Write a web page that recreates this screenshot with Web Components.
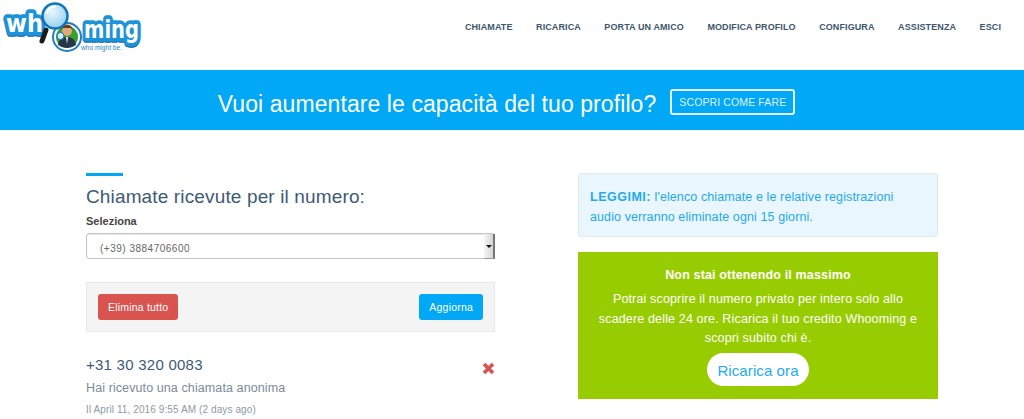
<!DOCTYPE html>
<html lang="it"><head><meta charset="utf-8"><title>Whooming</title>
<style>
html,body{margin:0;padding:0;background:#fff;overflow:hidden;height:419px}
body{font-family:"Liberation Sans",Arial,sans-serif;color:#3d566e}
</style></head><body>
<wh-header></wh-header>
<wh-banner></wh-banner>
<wh-main>
  <wh-calls slot="left"></wh-calls>
  <wh-side slot="right"></wh-side>
</wh-main>
<script>
function def(name,html){
  customElements.define(name,class extends HTMLElement{
    constructor(){super();this.attachShadow({mode:"open"}).innerHTML=html;}
  });
}
def("wh-logo",`<style>:host{display:block;width:145px;height:52px}svg{display:block;overflow:visible}
text{font-family:"DejaVu Sans",sans-serif;font-weight:700}</style>
<svg width="145" height="52" viewBox="0 0 145 52">
<defs><radialGradient id="g" cx=".4" cy=".35" r=".7"><stop offset="0" stop-color="#eaf7fd"/><stop offset="1" stop-color="#8fcdee"/></radialGradient></defs>
<g font-size="25" stroke-linejoin="round" stroke-linecap="round">
<text x="6" y="33.200" textLength="37" lengthAdjust="spacingAndGlyphs" fill="#0c5f9c" stroke="#0c5f9c" stroke-width="7.500">wh</text>
<text x="84" y="39.200" textLength="55" lengthAdjust="spacingAndGlyphs" fill="#0c5f9c" stroke="#0c5f9c" stroke-width="7.500">ming</text>
<text x="6" y="32" textLength="37" lengthAdjust="spacingAndGlyphs" fill="#1d93d9" stroke="#1d93d9" stroke-width="7.500">wh</text>
<text x="84" y="38" textLength="55" lengthAdjust="spacingAndGlyphs" fill="#1d93d9" stroke="#1d93d9" stroke-width="7.500">ming</text>
<text x="6" y="32" textLength="37" lengthAdjust="spacingAndGlyphs" fill="#fff">wh</text>
<text x="84" y="38" textLength="55" lengthAdjust="spacingAndGlyphs" fill="#fff">ming</text>
</g>
<path d="M46 30 L42 41" stroke="#1c1c1c" stroke-width="5" stroke-linecap="round"/>
<circle cx="67" cy="37" r="14" fill="#fff" stroke="#1b7fc4" stroke-width="2"/>
<circle cx="67" cy="37" r="11" fill="#38a12d"/>
<circle cx="67" cy="31" r="5" fill="#e3a77f"/>
<path d="M61.500 30a5.500 5.500 0 0 1 11 0l-1.500-2h-8z" fill="#6b3d1c"/>
<path d="M58 45q1-8 9-8t9 8q-4 3-9 3t-9-3z" fill="#27364a"/>
<path d="M66 37h2l-1 7z" fill="#fff"/>
<circle cx="60.500" cy="36" r="3.500" fill="#cfeefb" stroke="#1b6fa8"/>
<circle cx="55" cy="16" r="12.500" fill="url(#g)" stroke="#0f73b8" stroke-width="2.500"/>
<path d="M47 13a9 9 0 0 1 8-6.500" fill="none" stroke="#fff" stroke-width="2" stroke-linecap="round"/>
<text x="81" y="50" font-size="6.500" fill="#1b87c9" style="font-family:'Liberation Sans',sans-serif;font-weight:400" textLength="41">who might be.</text>
</svg>`);
def("wh-nav",`<style>:host{display:flex;gap:23.500px;font:700 9px/12px "Liberation Sans",sans-serif;color:#3d566e;letter-spacing:.1px}
a{color:inherit;text-decoration:none;white-space:nowrap}</style>
<a>CHIAMATE</a><a>RICARICA</a><a>PORTA UN AMICO</a><a>MODIFICA PROFILO</a><a>CONFIGURA</a><a>ASSISTENZA</a><a>ESCI</a>`);
def("wh-header",`<style>:host{display:flex;height:70px;box-sizing:border-box;justify-content:space-between;padding:0 23px 0 0;background:#fff}
wh-nav{margin-top:21px}</style><wh-logo></wh-logo><wh-nav></wh-nav>`);
def("wh-banner",`<style>:host{display:flex;height:60px;box-sizing:border-box;align-items:center;justify-content:center;gap:14px;background:#00a8f5;color:#fff;padding:4px 11px 0 0}
h2{margin:4px 0 0;font:400 23px/30px "Liberation Sans",sans-serif;letter-spacing:.08px}
a{display:block;box-sizing:border-box;height:26px;padding:0 7px;border:2px solid #e6f6fe;border-radius:3px;font:400 10.500px/23px "Liberation Sans",sans-serif;letter-spacing:.12px;white-space:nowrap;color:#dff4fe}</style>
<h2>Vuoi aumentare le capacità del tuo profilo?</h2><a>SCOPRI COME FARE</a>`);
def("wh-main",`<style>:host{display:grid;grid-template-columns:409px 360px;column-gap:83px;padding:43px 0 0 86px;align-items:start}</style>
<slot name="left"></slot><slot name="right"></slot>`);
def("wh-select",`<style>:host{display:flex;height:26px;box-sizing:border-box;border:1px solid #c4c4c4;border-radius:3px;background:#fff;box-shadow:inset 0 1px 1px rgba(0,0,0,.1);padding-left:13px;font:400 10px/29px "Liberation Sans",sans-serif;color:#666;letter-spacing:.5px;justify-content:space-between}
.b{width:11px;margin:0 -1px -1px 0;background:linear-gradient(90deg,#f6f6f6,#d4d4d4);border-right:2px solid #777;border-bottom:1px solid #999;box-sizing:border-box;display:flex;align-items:center;justify-content:center}
.b i{display:block;width:0;height:0;border:3px solid transparent;border-top:3px solid #111;border-bottom:0}</style>
<span>(+39) 3884706600</span><span class="b"><i></i></span>`);
def("wh-btn",`<style>:host{display:block;height:26px;padding:0 10px;border-radius:3px;font:400 10.500px/27px "Liberation Sans",sans-serif;color:#fff;letter-spacing:.2px;background:var(--bg);white-space:nowrap}</style><slot></slot>`);
def("wh-calls",`<style>:host{display:block}
.rule{width:37px;height:3px;background:#00a8f5}
h3{margin:9px 0 0;font:400 19px/24px "Liberation Sans",sans-serif;color:#3d5a76;letter-spacing:.14px}
label{display:block;margin-top:5px;font:700 11px/14px "Liberation Sans",sans-serif;color:#444}
wh-select{margin-top:5px}
.bar{display:flex;justify-content:space-between;align-items:center;box-sizing:border-box;height:50px;margin-top:23px;padding:0 11px;background:#f4f4f4;border:1px solid #e9e9e9}
.row{display:flex;justify-content:space-between;margin-top:23px}
.num{font:400 15px/19px "Liberation Sans",sans-serif;color:#3d5a76;letter-spacing:.25px}
.msg{margin-top:5px;font:400 12.500px/18px "Liberation Sans",sans-serif;color:#7a8b99;letter-spacing:.1px}
.date{margin-top:6px;font:400 10px/14px "Liberation Sans",sans-serif;color:#8c9aa5;letter-spacing:.1px}
svg{display:block;margin-top:7px}</style>
<div class="rule"></div>
<h3>Chiamate ricevute per il numero:</h3>
<label>Seleziona</label>
<wh-select></wh-select>
<div class="bar"><wh-btn style="--bg:#d9534f">Elimina tutto</wh-btn><wh-btn style="--bg:#00a8f5">Aggiorna</wh-btn></div>
<div class="row"><div><div class="num">+31 30 320 0083</div><div class="msg">Hai ricevuto una chiamata anonima</div><div class="date">Il April 11, 2016 9:55 AM (2 days ago)</div></div>
<svg width="13" height="13" viewBox="0 0 13 13"><path d="M2 2 11 11M11 2 2 11" stroke="#d9534f" stroke-width="3.600"/></svg></div>`);
def("wh-side",`<style>:host{display:block}
.info{box-sizing:border-box;height:64px;background:#e9f6fe;border:1px solid #dfe9ee;border-radius:3px;padding:13px 11px;font:400 12.500px/20px "Liberation Sans",sans-serif;color:#1fa9f2;letter-spacing:.1px}
.info b{letter-spacing:.5px}
.promo{box-sizing:border-box;height:147px;margin-top:15px;background:#97cc00;color:#fff;text-align:center;padding:14px 10px 0;font:400 12.500px/19.500px "Liberation Sans",sans-serif}
.t{font-weight:700;letter-spacing:.15px;line-height:18px;margin-bottom:6px}
.p{letter-spacing:.15px}
a{display:block;width:fit-content;margin:4px auto 0;padding:0 10.500px;height:33px;border-radius:17px;background:#fff;color:#1fa9f2;font:400 15px/35px "Liberation Sans",sans-serif;letter-spacing:.1px}</style>
<div class="info"><div><b>LEGGIMI:</b> l'elenco chiamate e le relative registrazioni</div><div>audio verranno eliminate ogni 15 giorni.</div></div>
<div class="promo"><div class="t">Non stai ottenendo il massimo</div><div class="p">Potrai scoprire il numero privato per intero solo allo<br>scadere delle 24 ore. Ricarica il tuo credito Whooming e<br>scopri subito chi è.</div><a>Ricarica ora</a></div>`);
</script>
</body></html>
